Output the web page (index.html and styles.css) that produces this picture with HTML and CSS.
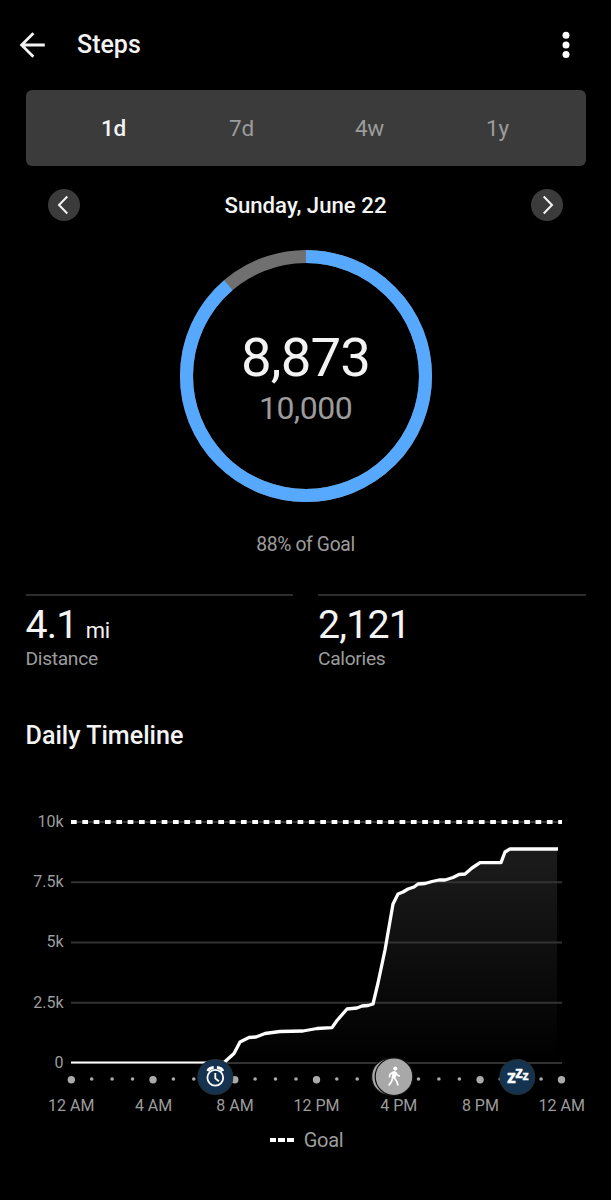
FILE: index.html
```html
<!DOCTYPE html>
<html lang="en">
<head>
	<meta charset="utf-8">
	<title>Steps</title>
	<meta name="viewport" content="width=device-width, initial-scale=1">
	<link rel="stylesheet" href="styles.css">
</head>
<body>
	<header class="topbar">
		<svg class="back" viewBox="0 0 26 26"><path d="M25.8 13H2.8M14.4 1.2 2.6 13l11.8 11.8"/></svg>
		<h1>Steps</h1>
		<svg class="more" viewBox="0 0 8 28"><circle cx="4" cy="4.3" r="3.5"/><circle cx="4" cy="13.9" r="3.5"/><circle cx="4" cy="23.5" r="3.5"/></svg>
	</header>

	<nav class="tabs">
		<div class="tab on">1d</div>
		<div class="tab">7d</div>
		<div class="tab">4w</div>
		<div class="tab">1y</div>
	</nav>

	<div class="day">
		<svg class="arrow" viewBox="0 0 32 32"><circle cx="16" cy="16" r="16"/><path d="M19.3 7.5 11 16l8.3 8.5"/></svg>
		<div class="date">Sunday, June 22</div>
		<svg class="arrow" viewBox="0 0 32 32"><circle cx="16" cy="16" r="16"/><path d="M12.7 7.5 21 16l-8.3 8.5"/></svg>
	</div>

	<div class="ring">
		<svg viewBox="0 0 252 252">
			<circle class="track" cx="126" cy="126" r="119.5"/>
			<circle class="progress" cx="126" cy="126" r="119.5" pathLength="10000" stroke-dasharray="8873 10000" transform="rotate(-90 126 126)"/>
		</svg>
		<div class="count">
			<div class="steps">8,873</div>
			<div class="goal">10,000</div>
		</div>
	</div>
	<div class="percent">88% of Goal</div>

	<div class="stats">
		<div class="stat">
			<div class="value">4.1<span class="unit">mi</span></div>
			<div class="label">Distance</div>
		</div>
		<div class="stat">
			<div class="value">2,121</div>
			<div class="label">Calories</div>
		</div>
	</div>

	<h2>Daily Timeline</h2>

	<svg class="chart" viewBox="0 800 611 320">
		<defs>
			<linearGradient id="fade" gradientUnits="userSpaceOnUse" x1="0" y1="849" x2="0" y2="1062">
				<stop offset="0" stop-color="#fff" stop-opacity=".11"/>
				<stop offset="1" stop-color="#fff" stop-opacity="0"/>
			</linearGradient>
		</defs>

		<!-- plot -->
		<path class="area" d="M226 1061L234 1053 240 1042 249 1037.5 256 1037 265 1033.5 280 1031.5 303 1031 317 1028.5 332 1027.6 337 1020.5 347 1009 357 1008 362 1006 368 1005.5 373 1004 378 983 385 950 393 904 398 894 403 892 408 889 414 887 418 884 425 883.5 432 881.5 439 880 445 880 453 877.5 459 874.5 465 874 472 868 480 862.7H501L505 852 510 849H557V1062H226Z"/>
		<path class="grid" d="M71 822H562M71 882.2H562M71 942.4H562M71 1002.7H562M71 1063H562"/>
		<path class="goal-line" d="M71 822H562"/>
		<path class="line" d="M216 1062.5H224L234 1053.5 240 1042 249 1037.5 256 1037 265 1033.5 280 1031.5 303 1031 317 1028.5 332 1027.6 337 1020.5 347 1009 357 1008 362 1006 368 1005.5 373 1004 378 983 385 950 393 904 398 894 403 892 408 889 414 887 418 884 425 883.5 432 881.5 439 880 445 880 453 877.5 459 874.5 465 874 472 868 480 862.7H501L505 852 510 849H558"/>
		<path class="line flat" d="M71 1062.4H218"/>

		<g class="y-axis">
			<text x="63.5" y="826.7">10k</text>
			<text x="63.5" y="887">7.5k</text>
			<text x="63.5" y="947.2">5k</text>
			<text x="63.5" y="1007.7">2.5k</text>
			<text x="63.5" y="1067.7">0</text>
		</g>

		<!-- hours, a large dot every four -->
		<path class="hours" d="M91.7 1079h0M112.1 1079h0M132.5 1079h0M173.4 1079h0M193.8 1079h0M255.1 1079h0M275.5 1079h0M296 1079h0M336.8 1079h0M357.2 1079h0M418.5 1079h0M438.9 1079h0M459.4 1079h0M500.2 1079h0M541.1 1079h0"/>
		<path class="hours big" d="M71.3 1079.8h0M153 1079.8h0M234.8 1079.8h0M316.5 1079.8h0M480.1 1079.8h0M561.5 1079.8h0"/>
		<g class="x-axis">
			<text x="71.2" y="1111.3">12 AM</text>
			<text x="153.6" y="1111.3">4 AM</text>
			<text x="235" y="1111.3">8 AM</text>
			<text x="316.5" y="1111.3">12 PM</text>
			<text x="398.7" y="1111.3">4 PM</text>
			<text x="480.4" y="1111.3">8 PM</text>
			<text x="561.8" y="1111.3">12 AM</text>
		</g>

		<!-- wake up -->
		<circle class="badge" cx="215.3" cy="1077" r="17.3"/>
		<g class="alarm">
			<circle cx="215.3" cy="1077.8" r="7.9"/>
			<path d="M215.3 1073v5.4l3.6 2.8"/>
			<path class="bell" d="M207.8 1071.1q1.5-3.2 5.9-3.5M222.8 1071.1q-1.5-3.2-5.9-3.5"/>
		</g>

		<!-- walks -->
		<circle class="walk" cx="390" cy="1076.7" r="18.4"/>
		<circle class="walk" cx="394" cy="1076.7" r="18.8"/>
		<g class="walker">
			<circle cx="395.3" cy="1068.6" r="2.1"/>
			<path class="body" d="M392.6 1071.5q1.8-.9 3.4.2l.5 2.6-1.1 4.1-3.8-.6Z"/>
			<path d="M393.2 1072.3l-3.2 1.9-.7 3.2M395.8 1072.5l1.5 2.6 2.5 1.1M392.7 1077.5l-1.1 4-2.8 4M394 1077.5l2.5 3.4 1.6 4.6"/>
		</g>

		<!-- sleep -->
		<circle class="badge" cx="517.3" cy="1077" r="17.3"/>
		<g class="zzz">
			<text x="507" y="1082.6" font-size="18">z</text>
			<text x="515.3" y="1078.2" font-size="15.5">z</text>
			<text x="522.6" y="1080.4" font-size="12.5">z</text>
		</g>
	</svg>

	<div class="legend">
		<span class="dashes"><i></i><i></i><i></i></span>
		<span>Goal</span>
	</div>
</body>
</html>
```
FILE: styles.css
```css
:root {
	--card: #3b3b3b;
	--text: #f3f3f3;
	--muted: #9c9c9c;
	--blue: #57a8ff;
	--navy: #143350;
}

* { box-sizing: border-box; }

body {
	margin: 0;
	height: 1200px;
	background: #000;
	color: var(--text);
	font-family: Roboto, sans-serif;
	overflow: hidden;
}

h1, h2 { margin: 0; font-weight: 500; white-space: nowrap; }

svg { display: block; }

.topbar {
	display: flex;
	align-items: center;
	height: 90px;
	padding: 0 41px 0 19px;
}
.topbar h1 { flex: 1; margin-left: 32px; font-size: 25px; line-height: 28px; }
.back { width: 26px; height: 26px; fill: none; stroke: var(--text); stroke-width: 2.8; }
.more { width: 8px; height: 28px; fill: #fff; }

.tabs {
	display: grid;
	grid-template-columns: repeat(4, 128px);
	justify-content: center;
	align-items: center;
	height: 76px;
	margin: 0 25.5px;
	border-radius: 6px;
	background: var(--card);
}
.tab { text-align: center; color: var(--muted); font-size: 22.5px; letter-spacing: -.2px; }
.tab.on { color: var(--text); font-weight: 500; }

.day {
	display: flex;
	align-items: center;
	justify-content: space-between;
	height: 78px;
	padding: 0 47.5px;
}
.arrow { width: 32px; height: 32px; fill: var(--card); }
.arrow path { fill: none; stroke: var(--text); stroke-width: 2; }
.date { font-size: 22.2px; font-weight: 500; }

.ring { display: grid; justify-content: center; height: 258px; padding-top: 6px; }
.ring>* { grid-area: 1 / 1; width: 252px; height: 252px; }
.ring circle { fill: none; stroke-width: 13; }
.track { stroke: #707070; }
.progress { stroke: var(--blue); }

.count { padding-top: 75px; text-align: center; }
.steps { font-size: 54.5px; line-height: 64px; letter-spacing: -.8px; }
.goal { color: var(--muted); font-size: 32px; line-height: 38px; letter-spacing: -.5px; }

.percent { margin-top: 31px; color: var(--muted); font-size: 19.3px; line-height: 24px; letter-spacing: -.35px; text-align: center; }

.stats {
	display: grid;
	grid-template-columns: 1fr 1fr;
	gap: 25px;
	margin: 37px 25.5px 0;
}
.stat { height: 80px; border-top: 2px solid #2d2d2d; }
.value { height: 48px; margin-top: 5px; font-size: 39.3px; line-height: 48px; letter-spacing: -.8px; white-space: nowrap; }
.unit { margin-left: 8px; font-size: 22px; letter-spacing: -.2px; }
.label { color: var(--muted); font-size: 19.2px; line-height: 20px; letter-spacing: -.3px; }

h2 { margin: 47px 0 0 25.5px; font-size: 25.1px; line-height: 30px; }

.chart { width: 611px; height: 320px; margin-top: 49px; }
.area { fill: url(#fade); }
.grid { stroke: #323232; stroke-width: 2; }
.goal-line { stroke: #fff; stroke-width: 3.8; stroke-dasharray: 5.7 5.63; }
.line { fill: none; stroke: #fff; stroke-width: 3.3; stroke-linejoin: round; }
.line.flat { stroke-width: 2; }
.y-axis, .x-axis { fill: var(--muted); font-size: 16px; }
.y-axis { text-anchor: end; }
.x-axis { text-anchor: middle; }
.hours { stroke: #aaa; stroke-width: 3.6; stroke-linecap: round; }
.hours.big { stroke-width: 7.4; }

.badge { fill: var(--navy); stroke: #20303d; stroke-width: 1.5; }
.alarm { fill: none; stroke: #fff; stroke-width: 1.8; }
.alarm .bell { stroke-width: 3; }
.walk { fill: #a8a8a8; stroke: #111; stroke-width: 1.2; }
.walker { fill: #fff; }
.walker path { fill: none; stroke: #fff; stroke-width: 1.7; }
.walker .body { fill: #fff; stroke: none; }
.zzz { fill: #fff; stroke: #fff; stroke-width: .3; font-family: "Noto Sans", sans-serif; font-weight: 700; }

.legend {
	display: flex;
	align-items: center;
	justify-content: center;
	gap: 10px;
	height: 40px;
	padding-left: 2px;
	color: var(--muted);
	font-size: 20px;
	letter-spacing: -.3px;
}
.dashes { display: flex; gap: 2px; }
.dashes i { width: 6.7px; height: 4px; background: #fff; }
```
